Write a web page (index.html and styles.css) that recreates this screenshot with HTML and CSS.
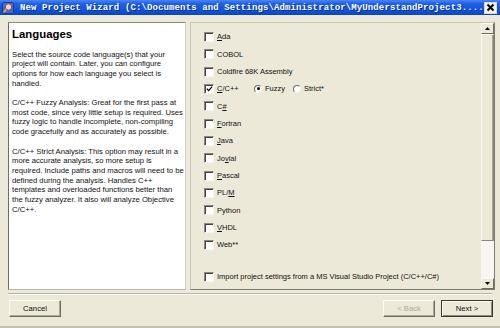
FILE: index.html
```html
<!DOCTYPE html>
<html>
<head>
<meta charset="utf-8">
<link rel="stylesheet" href="styles.css">
</head>
<body>
<div class="window">
  <div class="titlebar">
    <svg class="app-icon" width="12" height="12" viewBox="0 0 12 12">
      <rect x="0.5" y="0.5" width="11" height="11" rx="1" fill="#3b6fd8" stroke="#1a3c90"/>
      <circle cx="6.5" cy="5" r="3.2" fill="#f7d7c8" stroke="#b03a2a" stroke-width="1"/>
      <path d="M4.2 7.4 L1.8 10.2" stroke="#f0a030" stroke-width="1.8"/>
    </svg>
    <span class="title-text">New Project Wizard (C:\Documents and Settings\Administrator\MyUnderstandProject3....</span>
    <div class="close">
      <svg width="9" height="9" viewBox="0 0 9 9"><path d="M1.5 1.5 L7.5 7.5 M7.5 1.5 L1.5 7.5" stroke="#000" stroke-width="2"/></svg>
    </div>
  </div>

  <div class="content">
    <div class="info">
      <h1 class="info-title">Languages</h1>
      <p class="info-text">Select the source code language(s) that your<br>project will contain. Later, you can configure<br>options for how each language you select is<br>handled.</p>
      <p class="info-text">C/C++ Fuzzy Analysis: Great for the first pass at<br>most code, since very little setup is required. Uses<br>fuzzy logic to handle incomplete, non-compiling<br>code gracefully and as accurately as possible.</p>
      <p class="info-text">C/C++ Strict Analysis: This option may result in a<br>more accurate analysis, so more setup is<br>required. Include paths and macros will need to be<br>defined during the analysis. Handles C++<br>templates and overloaded functions better than<br>the fuzzy analyzer. It also will analyze Objective<br>C/C++.</p>
    </div>

    <div class="langs">
      <div class="list">
        <div class="row"><span class="cb"></span><span class="lbl"><u>A</u>da</span></div>
        <div class="row"><span class="cb"></span><span class="lbl">COBOL</span></div>
        <div class="row"><span class="cb"></span><span class="lbl">Coldfire 68K Assembly</span></div>
        <div class="row">
          <span class="cb checked"><svg width="8" height="8" viewBox="0 0 8 8"><path d="M1 3.5 L3 5.8 L7 1.2" fill="none" stroke="#000" stroke-width="1.4"/></svg></span>
          <span class="lbl lbl-cpp"><u>C</u>/C++</span>
          <span class="radio on"></span><span class="lbl lbl-fuzzy">Fuzzy</span>
          <span class="radio"></span><span class="lbl">Strict*</span>
        </div>
        <div class="row"><span class="cb"></span><span class="lbl">C<u>#</u></span></div>
        <div class="row"><span class="cb"></span><span class="lbl"><u>F</u>ortran</span></div>
        <div class="row"><span class="cb"></span><span class="lbl"><u>J</u>ava</span></div>
        <div class="row"><span class="cb"></span><span class="lbl">Jo<u>v</u>ial</span></div>
        <div class="row"><span class="cb"></span><span class="lbl"><u>P</u>ascal</span></div>
        <div class="row"><span class="cb"></span><span class="lbl">PL/<u>M</u></span></div>
        <div class="row"><span class="cb"></span><span class="lbl">Python</span></div>
        <div class="row"><span class="cb"></span><span class="lbl"><u>V</u>HDL</span></div>
        <div class="row"><span class="cb"></span><span class="lbl">Web**</span></div>
        <div class="row row-import"><span class="cb"></span><span class="lbl">Import project settings from a MS Visual Studio Project (C/C++/C#)</span></div>
      </div>
      <div class="scrollbar">
        <div class="sb-btn"><svg width="5" height="3" viewBox="0 0 5 3"><path d="M2.5 0 L5 3 L0 3 Z" fill="#000"/></svg></div>
        <div class="sb-thumb"></div>
        <div class="sb-track"></div>
        <div class="sb-btn"><svg width="5" height="3" viewBox="0 0 5 3"><path d="M0 0 L5 0 L2.5 3 Z" fill="#000"/></svg></div>
      </div>
    </div>
  </div>

  <div class="sep"></div>

  <div class="buttons">
    <button class="btn">Cancel</button>
    <div class="spacer"></div>
    <button class="btn" disabled>&lt; Back</button>
    <button class="btn btn-default">Next &gt;</button>
  </div>
</div>
</body>
</html>
```
FILE: styles.css
```css
html, body {
  margin: 0;
  padding: 0;
}
body {
  width: 500px;
  height: 328px;
  overflow: hidden;
  background: #ece9d8;
  font-family: "Liberation Sans", Arial, sans-serif;
}
.window {
  width: 500px;
  height: 328px;
  display: flex;
  flex-direction: column;
  box-sizing: border-box;
  border-bottom: 2px solid #c5c2b2;
}
.titlebar {
  height: 15px;
  flex: none;
  display: flex;
  align-items: center;
  background: linear-gradient(#4c86f2 0%, #1e5fe6 25%, #0f52dc 70%, #0a46c2 100%);
  padding-left: 2px;
}
.app-icon {
  flex: none;
  margin-right: 6px;
}
.title-text {
  flex: 1;
  color: #fff;
  font-family: "Liberation Mono", "Courier New", monospace;
  font-weight: bold;
  font-size: 9px;
  letter-spacing: 0.12px;
  white-space: nowrap;
  overflow: hidden;
  text-shadow: 1px 1px 0 #0a2f8a;
}
.close {
  flex: none;
  width: 13px;
  height: 12px;
  margin-right: 3px;
  background: #f4f3ee;
  display: flex;
  align-items: center;
  justify-content: center;
  box-sizing: border-box;
  border: 1px solid #dcd9cc;
}
.content {
  display: flex;
  gap: 4px;
  height: 268px;
  margin-top: 7px;
  padding-left: 8px;
  padding-right: 5px;
  flex: none;
}
.info {
  width: 178px;
  flex: none;
  box-sizing: border-box;
  background: #fff;
  border: 1px solid;
  border-color: #8e8b7e #d6d3c6 #b9b6a8 #6f6d62;
  padding: 4px 0 0 3px;
  overflow: hidden;
}
.info-title {
  margin: 0;
  font-size: 11.4px;
  line-height: 14px;
  font-weight: bold;
  color: #000;
}
.info-text {
  margin: 9.7px 0 0 0;
  font-size: 7.7px;
  line-height: 9.7px;
  color: #111;
  white-space: nowrap;
}
.info-title + .info-text {
  margin-top: 8.5px;
}
.langs {
  flex: 1;
  display: flex;
  box-sizing: border-box;
  border: 1px solid;
  border-color: #c9c6b8 #7d7a6e #7d7a6e #c9c6b8;
}
.list {
  flex: 1;
  padding-top: 5.3px;
  padding-left: 13px;
}
.row {
  height: 17.33px;
  display: flex;
  align-items: center;
  font-size: 7.5px;
  color: #111;
  white-space: nowrap;
}
.row-import {
  margin-top: 14.7px;
}
.cb {
  width: 10px;
  height: 10px;
  box-sizing: border-box;
  background: #fff;
  border: 1px solid;
  border-color: #8c897c #f6f5f0 #f6f5f0 #8c897c;
  box-shadow: inset 1px 1px 0 #46443c;
  flex: none;
  margin-right: 3px;
  display: flex;
  align-items: center;
  justify-content: center;
}
.cb svg {
  margin: 1px 0 0 1px;
}
.lbl u {
  text-decoration: underline;
  text-underline-offset: 1px;
}
.lbl-cpp {
  width: 37px;
}
.lbl-fuzzy {
  margin-right: 8px;
}
.radio {
  width: 8px;
  height: 8px;
  box-sizing: border-box;
  border-radius: 50%;
  background: #fff;
  border: 1px solid;
  border-color: #6f6d62 #f4f3ee #f4f3ee #6f6d62;
  flex: none;
  margin-right: 3px;
  display: flex;
  align-items: center;
  justify-content: center;
}
.radio.on::after {
  content: "";
  width: 3px;
  height: 3px;
  border-radius: 50%;
  background: #000;
}
.scrollbar {
  width: 13px;
  flex: none;
  display: flex;
  flex-direction: column;
}
.sb-btn {
  height: 11px;
  flex: none;
  box-sizing: border-box;
  background: #ece9d8;
  border: 1px solid;
  border-color: #fbfaf5 #6f6d62 #6f6d62 #fbfaf5;
  display: flex;
  align-items: center;
  justify-content: center;
}
.sb-thumb {
  height: 207px;
  flex: none;
  box-sizing: border-box;
  background: #ece9d8;
  border: 1px solid;
  border-color: #fbfaf5 #8a877a #8a877a #fbfaf5;
  box-shadow: inset -1px 0 0 #a9a699;
}
.sb-track {
  flex: 1;
  background: #f7f6f0;
}
.sep {
  height: 2px;
  margin: 3px 8px 0 8px;
  border-top: 1px solid #b7b4a6;
  border-bottom: 1px solid #fbfaf5;
  box-sizing: border-box;
  flex: none;
}
.buttons {
  display: flex;
  gap: 6px;
  margin-top: 5px;
  padding: 0 7px 0 9px;
  height: 17px;
  flex: none;
}
.spacer {
  flex: 1;
}
.btn {
  width: 52px;
  height: 17px;
  box-sizing: border-box;
  margin: 0;
  padding: 0;
  font-family: "Liberation Sans", Arial, sans-serif;
  font-size: 7.7px;
  color: #111;
  background: #ece9d8;
  border: 1px solid;
  border-color: #fbfaf5 #6f6d62 #6f6d62 #fbfaf5;
  box-shadow: inset -1px -1px 0 #aca899;
}
.btn:disabled {
  color: #aca899;
}
.btn-default {
  border: 1px solid #3a3830;
  box-shadow: inset 1px 1px 0 #fbfaf5, inset -1px -1px 0 #8a877a;
}
```
